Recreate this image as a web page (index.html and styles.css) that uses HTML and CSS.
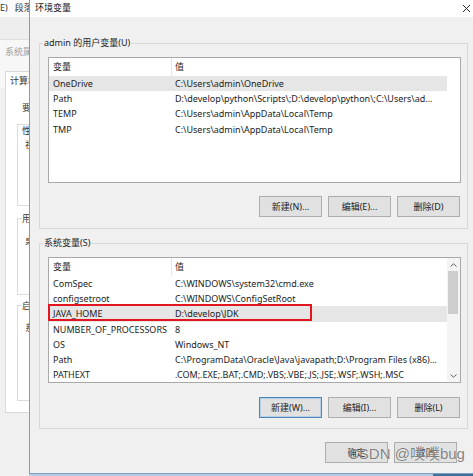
FILE: index.html
```html
<!DOCTYPE html>
<html>
<head>
<meta charset="utf-8">
<link rel="stylesheet" href="styles.css">
</head>
<body>
<div class="screen">
  <div class="desk">
    <div class="bgwin">
      <div class="bg-menu"><span>E)</span><span class="bg-menu-item">段落</span></div>
      <div class="bg-tool"></div>
      <div class="bg-title">系统属性</div>
      <div class="bg-tabs"><span class="bg-tab">计算机</span></div>
      <div class="bg-panel">
        <div class="bg-head">要</div>
        <div class="bg-group bg-g1"><span class="bg-label">性</span><span class="bg-sub">视</span></div>
        <div class="bg-group bg-g2"><span class="bg-label">用</span><span class="bg-sub">桌</span></div>
        <div class="bg-group bg-g3"><span class="bg-label">启</span><span class="bg-sub">系</span></div>
      </div>
      <div class="bg-foot"></div>
    </div>
    <div class="dialog">
      <div class="titlebar">
        <span class="title">环境变量</span>
        <svg class="close" width="9" height="9" viewBox="0 0 9 9"><path d="M1 1 L8 8 M8 1 L1 8" stroke="#2b2b2b" stroke-width="1" fill="none"/></svg>
      </div>
      <div class="body">
        <fieldset class="group group-user">
          <legend>admin 的用户变量(U)</legend>
          <div class="list">
            <div class="list-main list-main-user">
              <div class="head"><span class="cell">变量</span><span class="cell">值</span></div>
              <div class="row sel"><span class="cell">OneDrive</span><span class="cell">C:\Users\admin\OneDrive</span></div>
              <div class="row"><span class="cell">Path</span><span class="cell">D:\develop\python\Scripts\;D:\develop\python\;C:\Users\ad...</span></div>
              <div class="row"><span class="cell">TEMP</span><span class="cell">C:\Users\admin\AppData\Local\Temp</span></div>
              <div class="row"><span class="cell">TMP</span><span class="cell">C:\Users\admin\AppData\Local\Temp</span></div>
            </div>
          </div>
          <div class="btns">
            <button class="btn">新建(N)...</button>
            <button class="btn">编辑(E)...</button>
            <button class="btn">删除(D)</button>
          </div>
        </fieldset>
        <fieldset class="group group-sys">
          <legend>系统变量(S)</legend>
          <div class="list">
            <div class="list-main">
              <div class="head"><span class="cell">变量</span><span class="cell">值</span></div>
              <div class="row"><span class="cell">ComSpec</span><span class="cell">C:\WINDOWS\system32\cmd.exe</span></div>
              <div class="row"><span class="cell">configsetroot</span><span class="cell">C:\WINDOWS\ConfigSetRoot</span></div>
              <div class="row sel"><span class="cell">JAVA_HOME</span><span class="cell">D:\develop\JDK</span><span class="mark"></span></div>
              <div class="row"><span class="cell">NUMBER_OF_PROCESSORS</span><span class="cell">8</span></div>
              <div class="row"><span class="cell">OS</span><span class="cell">Windows_NT</span></div>
              <div class="row"><span class="cell">Path</span><span class="cell">C:\ProgramData\Oracle\Java\javapath;D:\Program Files (x86)...</span></div>
              <div class="row"><span class="cell">PATHEXT</span><span class="cell">.COM;.EXE;.BAT;.CMD;.VBS;.VBE;.JS;.JSE;.WSF;.WSH;.MSC</span></div>
            </div>
            <div class="scrollbar">
              <div class="sb-btn"><svg width="7" height="4" viewBox="0 0 7 4"><path d="M0.5 3.5 L3.5 0.8 L6.5 3.5" stroke="#606060" fill="none"/></svg></div>
              <div class="sb-thumb"></div>
              <div class="sb-track"></div>
              <div class="sb-btn"><svg width="7" height="4" viewBox="0 0 7 4"><path d="M0.5 0.5 L3.5 3.2 L6.5 0.5" stroke="#606060" fill="none"/></svg></div>
            </div>
          </div>
          <div class="btns btns-sys">
            <button class="btn btn-default">新建(W)...</button>
            <button class="btn">编辑(I)...</button>
            <button class="btn">删除(L)</button>
          </div>
        </fieldset>
        <div class="dlg-btns">
          <button class="btn">确定</button>
          <button class="btn">取消</button>
        </div>
      </div>
    </div>
  </div>
  <div class="taskbar"></div>
  <div class="watermark">CSDN @噗噗bug</div>
</div>
</body>
</html>
```

FILE: styles.css
```css
* { box-sizing: border-box; }
html, body { margin: 0; padding: 0; }
body {
  width: 473px;
  height: 476px;
  overflow: hidden;
  background: #f0f0f0;
  font-family: "Noto Sans", "Noto Sans CJK SC", sans-serif;
  font-size: 9px;
  color: #1c1c1c;
}
.screen {
  position: relative;
  width: 473px;
  height: 476px;
  display: flex;
  flex-direction: column;
}
.desk {
  display: flex;
  height: 474px;
  flex: none;
}

/* background window */
.bgwin {
  width: 29px;
  flex: none;
  overflow: hidden;
  display: flex;
  flex-direction: column;
  background: #f0f0f0;
  white-space: nowrap;
}
.bg-menu {
  height: 17px;
  background: #fbfbfb;
  line-height: 16px;
  color: #333;
  display: flex;
  gap: 7px;
}
.bg-tool {
  height: 23px;
  background: #eeeeee;
  border-bottom: 1px solid #dedede;
}
.bg-title {
  height: 30px;
  background: #f7f7f7;
  color: #a0a0a0;
  padding: 6px 0 0 5px;
  line-height: 12px;
}
.bg-tabs {
  height: 18px;
  background: #f7f7f7;
  padding-left: 5px;
  display: flex;
  align-items: flex-end;
}
.bg-tab {
  background: #fff;
  border: 1px solid #d9d9d9;
  border-bottom: none;
  padding: 2px 0 0 4px;
  height: 17px;
  line-height: 13px;
  color: #333;
}
.bg-panel {
  height: 325px;
  margin-left: 5px;
  background: #fff;
  border-left: 1px solid #d9d9d9;
  border-bottom: 1px solid #d9d9d9;
  padding: 14px 0 0 11px;
  display: flex;
  flex-direction: column;
  color: #333;
}
.bg-head { padding-left: 5px; line-height: 12px; height: 12px; }
.bg-group {
  border-left: 1px solid #dcdcdc;
  border-top: 1px solid #dcdcdc;
  border-bottom: 1px solid #dcdcdc;
  display: flex;
  flex-direction: column;
  padding-left: 4px;
}
.bg-g1 { height: 82px; margin-top: 10px; }
.bg-g2 { height: 77px; margin-top: 12px; }
.bg-g3 { height: 96px; margin-top: 10px; }
.bg-label { line-height: 12px; margin-top: 0; background: #fff; }
.bg-sub { padding-left: 3px; margin-top: 2px; line-height: 12px; }
.bg-g2 .bg-label, .bg-g3 .bg-label { margin-top: -6px; }
.bg-g2 .bg-sub, .bg-g3 .bg-sub { margin-top: 10px; }
.bg-foot { flex: 1; background: #f0f0f0; }

/* dialog */
.dialog {
  width: 444px;
  flex: none;
  display: flex;
  flex-direction: column;
  background: #f0f0f0;
  border-left: 1px solid #7b9ec0;
  border-bottom: 1px solid #7b9ec0;
}
.titlebar {
  height: 17px;
  background: #fff;
  display: flex;
  align-items: center;
  justify-content: space-between;
  padding: 0 2px 2px 5px;
  flex: none;
}
.title { line-height: 12px; color: #111; }
.close { margin-top: 2px; }
.body {
  padding-left: 9px;
  display: flex;
  flex-direction: column;
}
.group {
  margin: 20px 0 0 0;
  width: 429px;
  min-width: 0;
  border: 1px solid #d8d8d8;
  padding: 8px 6px 11px 8px;
}
.group-sys {
  margin-top: 8px;
  padding-bottom: 10px;
}
.group legend {
  padding: 0 1px;
  margin-left: -5px;
  line-height: 12px;
  color: #1c1c1c;
}
.list {
  height: 126px;
  border: 1px solid #a9a9a9;
  background: #fff;
  display: flex;
}
.list-main { flex: 1; min-width: 0; }
.list-main-user { margin-right: 13px; }
.head {
  height: 18px;
  display: grid;
  grid-template-columns: 122px 1fr;
  line-height: 17px;
}
.head .cell + .cell { border-left: 1px solid #e6e6e6; padding-left: 3px; }
.row {
  height: 15.2px;
  line-height: 15.2px;
  display: grid;
  grid-template-columns: 122px 1fr;
}
.cell {
  padding-left: 4px;
  white-space: nowrap;
  overflow: hidden;
}
.row.sel {
  background: #e6e6e6;
  position: relative;
}
.mark {
  position: absolute;
  left: -1px;
  top: -2.4px;
  width: 264px;
  height: 17px;
  border: 2px solid #e3151f;
}
.scrollbar {
  width: 13px;
  flex: none;
  background: #f4f4f4;
  display: flex;
  flex-direction: column;
}
.sb-btn {
  height: 13px;
  display: flex;
  align-items: center;
  justify-content: center;
}
.sb-thumb {
  height: 43px;
  margin: 0 2px 0 1px;
  background: #cdcdcd;
}
.sb-track { flex: 1; }
.btns {
  margin-top: 13px;
  display: flex;
  justify-content: flex-end;
  gap: 6px;
  padding-right: 1px;
}
.btns-sys { margin-top: 14px; }
.btn {
  width: 63px;
  height: 21px;
  padding: 0;
  margin: 0;
  background: #e1e1e1;
  border: 1px solid #adadad;
  font-family: "Noto Sans", "Noto Sans CJK SC", sans-serif;
  font-size: 9px;
  color: #1c1c1c;
  display: flex;
  align-items: center;
  justify-content: center;
}
.btn-default {
  border-color: #4a86b8;
  box-shadow: inset 0 0 0 1px #b5d0e6;
}
.dlg-btns {
  margin-top: 13px;
  display: flex;
  justify-content: flex-end;
  gap: 6px;
  padding-right: 16px;
}
.taskbar {
  height: 2px;
  flex: none;
  background: linear-gradient(to right, #f2f2f2 0 29px, #b7cbe0 29px 433px, #3f6f9c 433px);
}
.watermark {
  position: absolute;
  left: 348px;
  top: 445px;
  font-family: "Liberation Sans", "Noto Sans CJK SC", sans-serif;
  font-size: 15px;
  line-height: 18px;
  color: rgba(105, 105, 105, 0.85);
  text-shadow: 0 0 1px #fff;
  white-space: nowrap;
}
```
